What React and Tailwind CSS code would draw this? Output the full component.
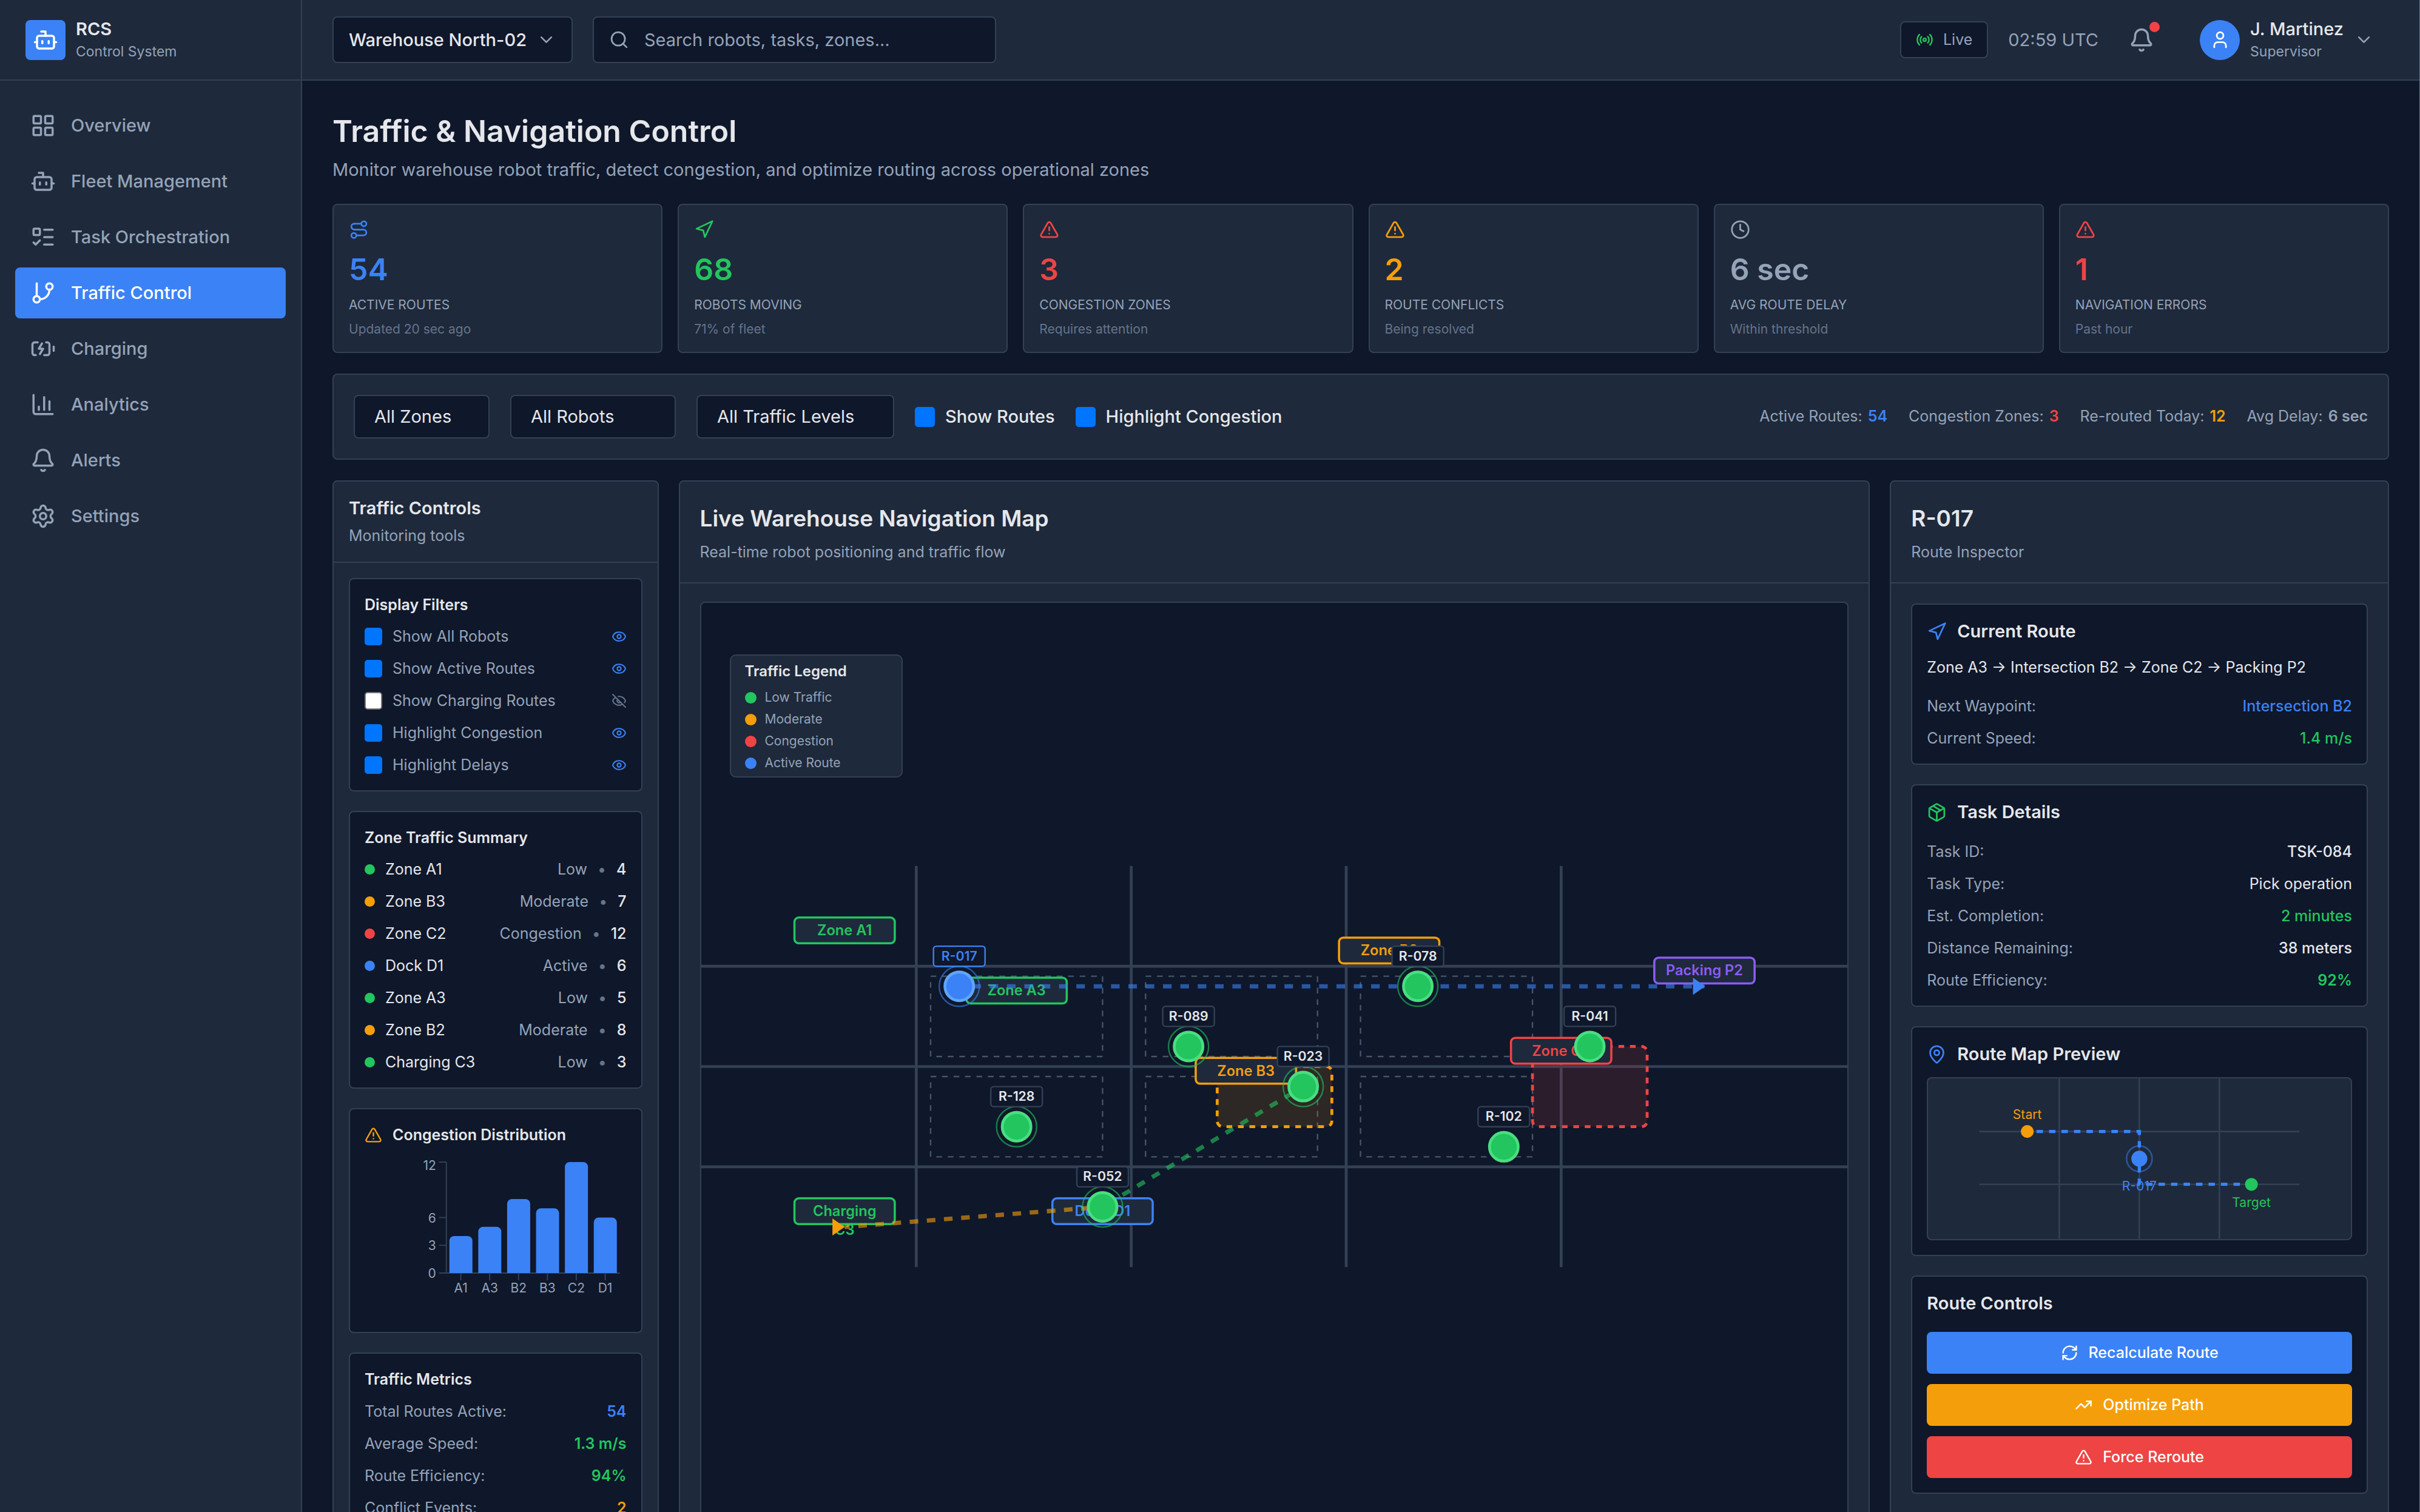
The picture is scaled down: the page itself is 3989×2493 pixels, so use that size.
import { useState } from 'react';
import {
    BatteryCharging,
    Bell,
    Bot,
    ChartColumn,
    ChevronDown,
    Clock,
    Eye,
    EyeOff,
    GitBranch,
    LayoutGrid,
    ListTodo,
    MapPin,
    Navigation,
    Package,
    Radio,
    RefreshCw,
    Route,
    Search,
    Settings,
    TrendingUp,
    TriangleAlert,
    User,
} from 'lucide-react';

const navItems = [
    { label: 'Overview', icon: LayoutGrid },
    { label: 'Fleet Management', icon: Bot },
    { label: 'Task Orchestration', icon: ListTodo },
    { label: 'Traffic Control', icon: GitBranch, active: true },
    { label: 'Charging', icon: BatteryCharging },
    { label: 'Analytics', icon: ChartColumn },
    { label: 'Alerts', icon: Bell },
    { label: 'Settings', icon: Settings },
];

const kpis = [
    { icon: Route, value: '54', label: 'Active Routes', note: 'Updated 20 sec ago', color: 'text-[#3b82f6]' },
    { icon: Navigation, value: '68', label: 'Robots Moving', note: '71% of fleet', color: 'text-[#22c55e]' },
    { icon: TriangleAlert, value: '3', label: 'Congestion Zones', note: 'Requires attention', color: 'text-[#ef4444]' },
    { icon: TriangleAlert, value: '2', label: 'Route Conflicts', note: 'Being resolved', color: 'text-[#f59e0b]' },
    { icon: Clock, value: '6 sec', label: 'Avg Route Delay', note: 'Within threshold', color: 'text-[#94a3b8]' },
    { icon: TriangleAlert, value: '1', label: 'Navigation Errors', note: 'Past hour', color: 'text-[#ef4444]' },
];

const quickStats = [
    { label: 'Active Routes:', value: '54', color: 'text-[#3b82f6]' },
    { label: 'Congestion Zones:', value: '3', color: 'text-[#ef4444]' },
    { label: 'Re-routed Today:', value: '12', color: 'text-[#f59e0b]' },
    { label: 'Avg Delay:', value: '6 sec', color: 'text-[#94a3b8]' },
];

const zoneSummary = [
    { name: 'Zone A1', level: 'Low', count: 4, dot: 'bg-[#22c55e]' },
    { name: 'Zone B3', level: 'Moderate', count: 7, dot: 'bg-[#f59e0b]' },
    { name: 'Zone C2', level: 'Congestion', count: 12, dot: 'bg-[#ef4444]' },
    { name: 'Dock D1', level: 'Active', count: 6, dot: 'bg-[#3b82f6]' },
    { name: 'Zone A3', level: 'Low', count: 5, dot: 'bg-[#22c55e]' },
    { name: 'Zone B2', level: 'Moderate', count: 8, dot: 'bg-[#f59e0b]' },
    { name: 'Charging C3', level: 'Low', count: 3, dot: 'bg-[#22c55e]' },
];

const congestion = [
    { zone: 'A1', value: 4 },
    { zone: 'A3', value: 5 },
    { zone: 'B2', value: 8 },
    { zone: 'B3', value: 7 },
    { zone: 'C2', value: 12 },
    { zone: 'D1', value: 6 },
];

const metrics = [
    { label: 'Total Routes Active:', value: '54', color: 'text-[#3b82f6] font-semibold' },
    { label: 'Average Speed:', value: '1.3 m/s', color: 'text-[#22c55e] font-semibold' },
    { label: 'Route Efficiency:', value: '94%', color: 'text-[#22c55e] font-semibold' },
    { label: 'Conflict Events:', value: '2', color: 'text-[#f59e0b] font-semibold' },
];

const routeInfo = [
    { label: 'Next Waypoint:', value: 'Intersection B2', color: 'text-[#3b82f6] font-medium' },
    { label: 'Current Speed:', value: '1.4 m/s', color: 'text-[#22c55e] font-medium' },
];

const taskInfo = [
    { label: 'Task ID:', value: 'TSK-084', color: 'font-medium' },
    { label: 'Task Type:', value: 'Pick operation', color: '' },
    { label: 'Est. Completion:', value: '2 minutes', color: 'text-[#22c55e] font-medium' },
    { label: 'Distance Remaining:', value: '38 meters', color: 'font-medium' },
    { label: 'Route Efficiency:', value: '92%', color: 'text-[#22c55e] font-semibold' },
];

const legend = [
    { label: 'Low Traffic', dot: 'bg-[#22c55e]' },
    { label: 'Moderate', dot: 'bg-[#f59e0b]' },
    { label: 'Congestion', dot: 'bg-[#ef4444]' },
    { label: 'Active Route', dot: 'bg-[#3b82f6]' },
];

// map units: 800 x 280
const zones = [
    { lines: ['Zone A1'], x: 100, y: 45, color: '#22c55e' },
    { lines: ['Zone A3'], x: 220, y: 87, color: '#22c55e' },
    { lines: ['Zone B2'], x: 480, y: 59, color: '#f59e0b' },
    { lines: ['Zone B3'], x: 380, y: 143, color: '#f59e0b' },
    { lines: ['Zone C2'], x: 600, y: 129, color: '#ef4444' },
    { lines: ['Dock D1'], x: 280, y: 241, color: '#3b82f6' },
    { lines: ['Charging', 'C3'], x: 100, y: 241, color: '#22c55e' },
    { lines: ['Packing P2'], x: 700, y: 73, color: '#8b5cf6' },
];

const robots = [
    { id: 'R-017', x: 180, y: 84, moving: true, selected: true },
    { id: 'R-023', x: 420, y: 154, moving: true },
    { id: 'R-041', x: 620, y: 126 },
    { id: 'R-052', x: 280, y: 238, moving: true },
    { id: 'R-078', x: 500, y: 84, moving: true },
    { id: 'R-089', x: 340, y: 126, moving: true },
    { id: 'R-102', x: 560, y: 196 },
    { id: 'R-128', x: 220, y: 182, moving: true },
];

function Sidebar() {
    return (
        <aside className="flex w-[498px] shrink-0 flex-col border-r-2 border-[#334155] bg-[#1e293b]">
            <div className="flex h-[133px] items-center gap-[17px] border-b-2 border-[#334155] px-[42px]">
                <div className="flex size-[66px] items-center justify-center rounded-lg bg-[#3b82f6]">
                    <Bot size={42} className="text-white" />
                </div>
                <div>
                    <p className="text-[29px] leading-[38px] font-semibold">RCS</p>
                    <p className="text-[23px] leading-[36px] text-[#94a3b8]">Control System</p>
                </div>
            </div>
            <nav className="flex flex-col gap-2 px-[25px] py-8">
                {navItems.map(({ label, icon: Icon, active }) => (
                    <a
                        key={label}
                        href="#"
                        className={`flex h-[84px] items-center gap-[25px] rounded-lg px-[25px] text-[29px] font-medium ${active ? 'bg-[#3b82f6] text-white' : 'text-[#94a3b8]'}`}
                    >
                        <Icon size={42} />
                        {label}
                    </a>
                ))}
            </nav>
        </aside>
    );
}

function Header() {
    return (
        <header className="flex h-[133px] shrink-0 items-center gap-[33px] border-b-2 border-[#334155] bg-[#1e293b] px-[50px]">
            <div className="flex h-[77px] w-[396px] items-center gap-[17px] rounded-lg border-2 border-[#334155] bg-[#0f172a] px-[25px]">
                <select aria-label="Warehouse" className="min-w-0 flex-1 appearance-none bg-transparent text-[29px] font-medium">
                    <option>Warehouse North-02</option>
                </select>
                <ChevronDown size={33} className="shrink-0 text-[#94a3b8]" />
            </div>
            <label className="flex h-[77px] w-[665px] items-center gap-[25px] rounded-lg border-2 border-[#334155] bg-[#0f172a] px-[25px]">
                <Search size={33} className="shrink-0 text-[#94a3b8]" />
                <input
                    type="text"
                    aria-label="Search"
                    placeholder="Search robots, tasks, zones..."
                    className="min-w-0 flex-1 bg-transparent text-[29px] outline-none placeholder:text-[#94a3b8]"
                />
            </label>

            <div className="ml-auto flex items-center gap-[33px]">
                <div className="flex h-[61px] items-center gap-4 rounded-lg border-2 border-[#334155] bg-[#0f172a] px-6">
                    <Radio size={29} className="text-[#22c55e]" />
                    <span className="text-[25px] text-[#94a3b8]">Live</span>
                </div>
                <span className="text-[29px] text-[#94a3b8]">02:59 UTC</span>
                <button type="button" aria-label="Notifications" className="relative p-[17px] text-[#94a3b8]">
                    <Bell size={42} />
                    <span className="absolute top-2 right-2 size-[17px] rounded-full bg-[#ef4444]" />
                </button>
                <button type="button" className="flex items-center gap-[17px] px-[25px]">
                    <span className="flex size-[66px] items-center justify-center rounded-full bg-[#3b82f6]">
                        <User size={33} className="text-white" />
                    </span>
                    <span className="text-left">
                        <span className="block text-[29px] leading-[38px] font-medium">J. Martinez</span>
                        <span className="block text-[23px] leading-[36px] text-[#94a3b8]">Supervisor</span>
                    </span>
                    <ChevronDown size={33} className="text-[#94a3b8]" />
                </button>
            </div>
        </header>
    );
}

function KpiCard({ icon: Icon, value, label, note, color }) {
    return (
        <div className="rounded-lg border-2 border-[#334155] bg-[#1e293b] px-[25px] pt-6 pb-5">
            <Icon size={33} className={color} />
            <p className={`mt-[17px] text-[50px] leading-[64px] font-semibold ${color}`}>{value}</p>
            <p className="mt-[10px] text-[21px] leading-[34px] text-[#94a3b8] uppercase">{label}</p>
            <p className="mt-[6px] text-[21px] leading-[34px] text-[#64748b]">{note}</p>
        </div>
    );
}

function Checkbox({ label, checked, onChange, boxClass, textClass }) {
    return (
        <label className="flex items-center gap-[17px]">
            <input
                type="checkbox"
                checked={checked}
                onChange={onChange}
                className={`shrink-0 appearance-none rounded-[5px] border-2 border-[#767676] bg-white checked:border-[#0075ff] checked:bg-[#0075ff] ${boxClass}`}
            />
            <span className={textClass}>{label}</span>
        </label>
    );
}

function FilterSelect({ label, value, className }) {
    return (
        <select
            aria-label={label}
            className={`h-[72px] appearance-none rounded-lg border-2 border-[#334155] bg-[#0f172a] pl-8 text-[29px] ${className}`}
        >
            <option>{value}</option>
        </select>
    );
}

function FilterBar() {
    const [routes, setRoutes] = useState(true);
    const [highlight, setHighlight] = useState(true);

    return (
        <div className="mt-[34px] flex items-center gap-[34px] rounded-lg border-2 border-[#334155] bg-[#1e293b] p-[33px]">
            <FilterSelect label="Zone" value="All Zones" className="w-[224px]" />
            <FilterSelect label="Robot" value="All Robots" className="w-[273px]" />
            <FilterSelect label="Traffic level" value="All Traffic Levels" className="w-[326px]" />
            <Checkbox
                label="Show Routes"
                checked={routes}
                onChange={() => setRoutes(!routes)}
                boxClass="size-[33px]"
                textClass="text-[29px] font-medium"
            />
            <Checkbox
                label="Highlight Congestion"
                checked={highlight}
                onChange={() => setHighlight(!highlight)}
                boxClass="size-[33px]"
                textClass="text-[29px] font-medium"
            />
            <div className="ml-auto flex gap-[35px] text-[25px] text-[#94a3b8]">
                {quickStats.map((s) => (
                    <span key={s.label} className="flex gap-[9px]">
                        {s.label} <span className={`font-semibold ${s.color}`}>{s.value}</span>
                    </span>
                ))}
            </div>
        </div>
    );
}

function Card({ children }) {
    return <section className="rounded-lg border-2 border-[#334155] bg-[#0f172a] p-6">{children}</section>;
}

function DetailRows({ rows, className }) {
    return (
        <dl className={`flex flex-col gap-[17px] text-[25px] leading-[36px] ${className}`}>
            {rows.map((row) => (
                <div key={row.label} className="flex justify-between">
                    <dt className="text-[#94a3b8]">{row.label}</dt>
                    <dd className={row.color}>{row.value}</dd>
                </div>
            ))}
        </dl>
    );
}

function DisplayFilters() {
    const [filters, setFilters] = useState([
        { label: 'Show All Robots', on: true },
        { label: 'Show Active Routes', on: true },
        { label: 'Show Charging Routes', on: false },
        { label: 'Highlight Congestion', on: true },
        { label: 'Highlight Delays', on: true },
    ]);

    const toggle = (label) => setFilters(filters.map((f) => (f.label === label ? { ...f, on: !f.on } : f)));

    return (
        <Card>
            <h3 className="text-[25px] leading-[36px] font-semibold">Display Filters</h3>
            <div className="mt-4 flex flex-col gap-[17px] text-[25px] leading-[36px]">
                {filters.map((f) => (
                    <div key={f.label} className="flex items-center justify-between">
                        <Checkbox
                            label={f.label}
                            checked={f.on}
                            onChange={() => toggle(f.label)}
                            boxClass="size-[29px]"
                            textClass="text-[#94a3b8]"
                        />
                        {f.on ? <Eye size={25} className="text-[#3b82f6]" /> : <EyeOff size={25} className="text-[#64748b]" />}
                    </div>
                ))}
            </div>
        </Card>
    );
}

function ZoneSummary() {
    return (
        <Card>
            <h3 className="text-[25px] leading-[36px] font-semibold">Zone Traffic Summary</h3>
            <ul className="mt-4 flex flex-col gap-[17px] text-[25px] leading-[36px]">
                {zoneSummary.map((z) => (
                    <li key={z.name} className="flex items-center gap-[17px]">
                        <span className={`size-[17px] rounded-full ${z.dot}`} />
                        <span>{z.name}</span>
                        <span className="ml-auto text-[#94a3b8]">{z.level}</span>
                        <span className="text-[#64748b]">•</span>
                        <span className="font-medium">{z.count}</span>
                    </li>
                ))}
            </ul>
        </Card>
    );
}

function CongestionChart() {
    // plot area: x 134..420, y 10..193
    const band = 47.6;
    const yOf = (v) => 193 - (v / 12) * 183;

    return (
        <Card>
            <h3 className="flex items-center gap-[17px] text-[25px] leading-[36px] font-semibold">
                <TriangleAlert size={29} className="text-[#f59e0b]" />
                Congestion Distribution
            </h3>
            <svg viewBox="0 0 430 266" className="mt-[17px] h-[266px] w-full" fontSize="21" fill="#94a3b8">
                <g stroke="#334155" strokeWidth="2" fill="none">
                    <path d="M134 10V193H420" />
                    {[0, 3, 6, 12].map((v) => (
                        <path key={v} d={`M122 ${yOf(v)}H134`} />
                    ))}
                    {congestion.map((c, i) => (
                        <path key={c.zone} d={`M${134 + band * (i + 0.5)} 193v12`} />
                    ))}
                </g>
                {congestion.map((c, i) => {
                    const x = 134 + band * i + 5;
                    const y = yOf(c.value);
                    return (
                        <path
                            key={c.zone}
                            fill="#3b82f6"
                            d={`M${x} 193V${y + 8}a8 8 0 0 1 8 -8h22a8 8 0 0 1 8 8V193z`}
                        />
                    );
                })}
                <g textAnchor="end">
                    <text x="117" y="23">12</text>
                    <text x="117" y={yOf(6) + 8}>6</text>
                    <text x="117" y={yOf(3) + 8}>3</text>
                    <text x="117" y={yOf(0) + 8}>0</text>
                </g>
                <g textAnchor="middle">
                    {congestion.map((c, i) => (
                        <text key={c.zone} x={134 + band * (i + 0.5)} y="225">{c.zone}</text>
                    ))}
                </g>
            </svg>
        </Card>
    );
}

function TrafficControls() {
    return (
        <section className="col-span-2 rounded-lg border-2 border-[#334155] bg-[#1e293b]">
            <div className="border-b-2 border-[#334155] px-[25px] pt-6 pb-[23px]">
                <h2 className="text-[29px] leading-[40px] font-semibold">Traffic Controls</h2>
                <p className="mt-[5px] text-[25px] leading-[40px] text-[#94a3b8]">Monitoring tools</p>
            </div>
            <div className="flex flex-col gap-8 p-[25px]">
                <DisplayFilters />
                <ZoneSummary />
                <CongestionChart />
                <Card>
                    <h3 className="text-[25px] leading-[36px] font-semibold">Traffic Metrics</h3>
                    <DetailRows rows={metrics} className="mt-[17px]" />
                </Card>
            </div>
        </section>
    );
}

function MapRobot({ id, x, y, moving, selected }) {
    const fill = selected ? '#3b82f6' : '#22c55e';

    return (
        <g>
            {moving && <circle cx={x} cy={y} r="14" fill="none" stroke={fill} strokeWidth="1" opacity="0.6" />}
            <circle cx={x} cy={y} r="10" fill={fill} stroke={selected ? '#60a5fa' : '#4ade80'} strokeWidth="2" />
            <rect
                x={x - 18}
                y={y - 28}
                width="36"
                height="14"
                rx="2"
                fill="#0f172a"
                stroke={selected ? '#3b82f6' : '#334155'}
                strokeWidth="1"
            />
            <text x={x} y={y - 18} textAnchor="middle" fontSize="9" fontWeight="600" fill={selected ? '#3b82f6' : '#e5e7eb'}>
                {id}
            </text>
        </g>
    );
}

function NavigationMap() {
    return (
        <div className="relative h-[1533px] rounded-lg border-2 border-[#334155] bg-[#0f172a]">
            <svg viewBox="0 0 800 280" className="h-full w-full">
                <g fill="none" stroke="#334155" strokeWidth="2">
                    <path d="M0 70H800M0 140H800M0 210H800" />
                    <path d="M150 0V280M300 0V280M450 0V280M600 0V280" />
                </g>
                <g fill="none" stroke="#475569" strokeWidth="1" strokeDasharray="4 4">
                    {[160, 310, 460].map((x) => (
                        <g key={x}>
                            <rect x={x} y="77" width="120" height="56" />
                            <rect x={x} y="147" width="120" height="56" />
                        </g>
                    ))}
                </g>

                <g fillOpacity="0.13" strokeWidth="2" strokeDasharray="4 4">
                    <rect x="360" y="140" width="80" height="42" rx="4" fill="#f59e0b" stroke="#f59e0b" />
                    <rect x="580" y="126" width="80" height="56" rx="4" fill="#ef4444" stroke="#ef4444" />
                </g>

                {zones.map((z) => (
                    <g key={z.lines[0]}>
                        <rect
                            x={z.x - 35}
                            y={z.y - 9}
                            width="70"
                            height="18"
                            rx="3"
                            fill="#1e293b"
                            stroke={z.color}
                            strokeWidth="1.5"
                        />
                        <text textAnchor="middle" fontSize="10" fontWeight="600" fill={z.color}>
                            {z.lines.map((line, i) => (
                                <tspan key={line} x={z.x} y={z.y + 3.4 + i * 13}>
                                    {line}
                                </tspan>
                            ))}
                        </text>
                    </g>
                ))}

                <g fill="none" strokeWidth="3" strokeDashoffset="3" opacity="0.6">
                    <path d="M180 84H700" stroke="#3b82f6" strokeDasharray="6 6.1" />
                    <path d="M420 154L280 238" stroke="#22c55e" strokeDasharray="6 6" />
                    <path d="M280 238L100 252" stroke="#f59e0b" strokeDasharray="6 6" />
                </g>
                <path d="M692 78L700.5 84L692 90z" fill="#3b82f6" />
                <path d="M91.5 246L100 252L91.5 258z" fill="#f59e0b" />

                {robots.map((r) => (
                    <MapRobot key={r.id} {...r} />
                ))}
            </svg>

            <div className="absolute top-[85px] left-[47px] w-[285px] rounded-[10px] border-2 border-[#334155] bg-[#1e293b] px-[23px] pt-2 pb-1">
                <p className="text-[24px] leading-[36px] font-semibold">Traffic Legend</p>
                <ul className="mt-[7px] text-[21px] leading-[36px] text-[#94a3b8]">
                    {legend.map((l) => (
                        <li key={l.label} className="flex items-center gap-[14px]">
                            <span className={`size-[19px] rounded-full ${l.dot}`} />
                            {l.label}
                        </li>
                    ))}
                </ul>
            </div>
        </div>
    );
}

function RoutePreview() {
    return (
        <svg
            viewBox="0 0 264 100"
            className="mt-[18px] h-[269px] w-full rounded-lg border-2 border-[#334155] bg-[#1e293b]"
            fontSize="8"
            textAnchor="middle"
        >
            <g transform="translate(32 0)">
                <path d="M0 33H200M0 66H200M50 0V100M100 0V100M150 0V100" stroke="#334155" strokeWidth="1" />
                <path
                    d="M30 33H100V66H170"
                    fill="none"
                    stroke="#3b82f6"
                    strokeWidth="2"
                    strokeDasharray="4 3.8"
                    strokeDashoffset="2"
                />
                <circle cx="30" cy="33" r="4" fill="#f59e0b" />
                <text x="30" y="25" fill="#f59e0b">Start</text>
                <circle cx="100" cy="50" r="8" fill="none" stroke="#3b82f6" strokeWidth="1" opacity="0.5" />
                <circle cx="100" cy="50" r="5" fill="#3b82f6" />
                <text x="100" y="70" fill="#3b82f6">R-017</text>
                <circle cx="170" cy="66" r="4" fill="#22c55e" />
                <text x="170" y="80" fill="#22c55e">Target</text>
            </g>
        </svg>
    );
}

function ActionButton({ icon: Icon, label, className }) {
    return (
        <button
            type="button"
            className={`flex h-[69px] items-center justify-center gap-[17px] rounded-lg text-[25px] font-medium text-white ${className}`}
        >
            <Icon size={29} />
            {label}
        </button>
    );
}

function RouteInspector() {
    return (
        <section className="col-span-3 rounded-lg border-2 border-[#334155] bg-[#1e293b]">
            <div className="border-b-2 border-[#334155] px-[33px] pt-[33px] pb-[30px]">
                <h2 className="text-[37px] leading-[56px] font-semibold">R-017</h2>
                <p className="mt-[7px] text-[25px] leading-[40px] text-[#94a3b8]">Route Inspector</p>
            </div>
            <div className="flex flex-col gap-8 p-[33px]">
                <Card>
                    <h3 className="flex items-center gap-[17px] text-[29px] leading-[40px] font-semibold">
                        <Navigation size={33} className="text-[#3b82f6]" />
                        Current Route
                    </h3>
                    <p className="mt-5 text-[25px] leading-[38px]">Zone A3 → Intersection B2 → Zone C2 → Packing P2</p>
                    <DetailRows rows={routeInfo} className="mt-[27px]" />
                </Card>
                <Card>
                    <h3 className="flex items-center gap-[17px] text-[29px] leading-[40px] font-semibold">
                        <Package size={33} className="text-[#22c55e]" />
                        Task Details
                    </h3>
                    <DetailRows rows={taskInfo} className="mt-[27px]" />
                </Card>
                <Card>
                    <h3 className="flex items-center gap-[17px] text-[29px] leading-[40px] font-semibold">
                        <MapPin size={33} className="text-[#3b82f6]" />
                        Route Map Preview
                    </h3>
                    <RoutePreview />
                </Card>
                <Card>
                    <h3 className="text-[29px] leading-[40px] font-semibold">Route Controls</h3>
                    <div className="mt-[27px] flex flex-col gap-[17px]">
                        <ActionButton icon={RefreshCw} label="Recalculate Route" className="bg-[#3b82f6]" />
                        <ActionButton icon={TrendingUp} label="Optimize Path" className="bg-[#f59e0b]" />
                        <ActionButton icon={TriangleAlert} label="Force Reroute" className="bg-[#ef4444]" />
                    </div>
                </Card>
            </div>
        </section>
    );
}

export default function App() {
    return (
        <div className="flex h-screen overflow-hidden border-r border-[#64748b] bg-[#0f172a] font-['Inter',sans-serif] text-[#e5e7eb]">
            <Sidebar />
            <div className="flex min-w-0 flex-1 flex-col">
                <Header />
                <main className="min-h-0 flex-1 overflow-hidden p-[50px]">
                    <h1 className="text-[50px] leading-[66px] font-semibold">Traffic &amp; Navigation Control</h1>
                    <p className="mt-2 text-[29px] leading-[46px] text-[#94a3b8]">
                        Monitor warehouse robot traffic, detect congestion, and optimize routing across operational zones
                    </p>

                    <div className="mt-[33px] grid grid-cols-6 gap-[25px]">
                        {kpis.map((k) => (
                            <KpiCard key={k.label} {...k} />
                        ))}
                    </div>

                    <FilterBar />

                    <div className="mt-[34px] grid grid-cols-12 gap-[33px]">
                        <TrafficControls />
                        <section className="col-span-7 rounded-lg border-2 border-[#334155] bg-[#1e293b]">
                            <div className="border-b-2 border-[#334155] px-[33px] pt-[33px] pb-[30px]">
                                <h2 className="text-[37px] leading-[56px] font-semibold">Live Warehouse Navigation Map</h2>
                                <p className="mt-[7px] text-[25px] leading-[40px] text-[#94a3b8]">
                                    Real-time robot positioning and traffic flow
                                </p>
                            </div>
                            <div className="px-[33px] pt-[30px] pb-[33px]">
                                <NavigationMap />
                            </div>
                        </section>
                        <RouteInspector />
                    </div>
                </main>
            </div>
        </div>
    );
}
